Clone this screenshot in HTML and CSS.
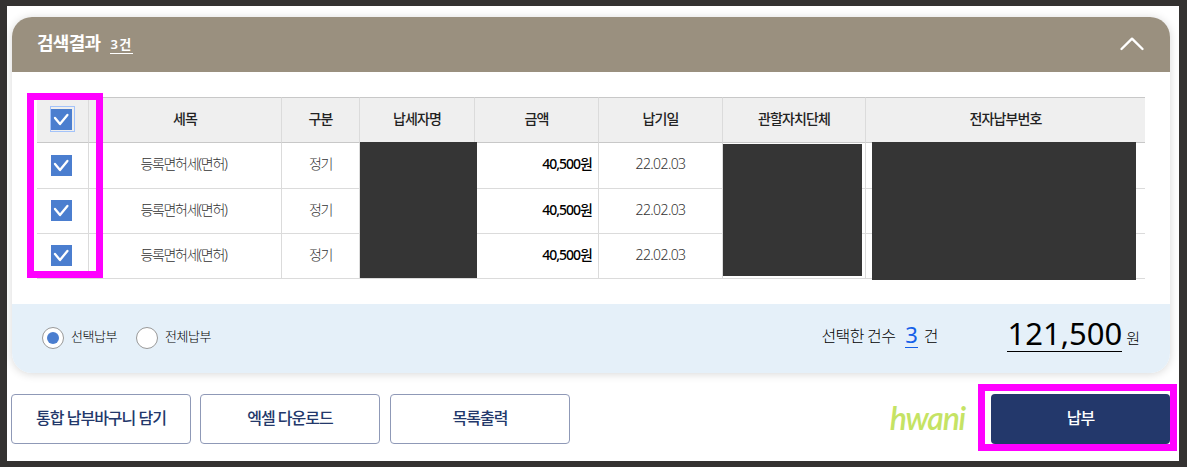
FILE: index.html
```
<!DOCTYPE html>
<html lang="ko">
<head>
  <meta charset="UTF-8" />
  <meta name="viewport" content="width=device-width, initial-scale=1.0" />
  <title>검색결과</title>
  <link rel="stylesheet" href="styles.css">
</head>
<body>
  <svg width="0" height="0" class="defs">
    <symbol id="check" viewBox="0 0 21 21">
      <path d="M4 9 L9 15 L16.4 6" fill="none" stroke="#fff" stroke-width="2.3" stroke-linecap="round" stroke-linejoin="round" />
    </symbol>
  </svg>

  <div class="page">
    <section class="card">
      <header class="card-header">
        <h2>검색결과</h2>
        <span class="count">3건</span>
        <svg class="toggle" width="26" height="16" viewBox="0 0 26 16">
          <path d="M2.5 13 L13 2.7 L23.5 13" fill="none" stroke="#fff" stroke-width="2.4" stroke-linecap="round" stroke-linejoin="round" />
        </svg>
      </header>

      <div class="table-wrap">
        <table>
          <colgroup>
            <col class="c-check"><col class="c-item"><col class="c-type"><col class="c-name">
            <col class="c-price"><col class="c-date"><col class="c-office"><col class="c-number">
          </colgroup>
          <thead>
            <tr>
              <th><span class="checkbox focus"><svg><use href="#check" /></svg></span></th>
              <th>세목</th>
              <th>구분</th>
              <th>납세자명</th>
              <th>금액</th>
              <th>납기일</th>
              <th>관할자치단체</th>
              <th>전자납부번호</th>
            </tr>
          </thead>
          <tbody>
            <tr class="first">
              <td><span class="checkbox"><svg><use href="#check" /></svg></span></td>
              <td class="item">등록면허세(면허)</td>
              <td>정기</td>
              <td></td>
              <td class="price">40,500원</td>
              <td class="date">22.02.03</td>
              <td></td>
              <td></td>
            </tr>
            <tr>
              <td><span class="checkbox"><svg><use href="#check" /></svg></span></td>
              <td class="item">등록면허세(면허)</td>
              <td>정기</td>
              <td></td>
              <td class="price">40,500원</td>
              <td class="date">22.02.03</td>
              <td></td>
              <td></td>
            </tr>
            <tr>
              <td><span class="checkbox"><svg><use href="#check" /></svg></span></td>
              <td class="item">등록면허세(면허)</td>
              <td>정기</td>
              <td></td>
              <td class="price">40,500원</td>
              <td class="date">22.02.03</td>
              <td></td>
              <td></td>
            </tr>
          </tbody>
        </table>
        <!-- private columns -->
        <div class="mask mask-name"></div>
        <div class="mask mask-office"></div>
        <div class="mask mask-number"></div>
        <div class="highlight highlight-check"></div>
      </div>

      <footer class="summary">
        <span class="radio on"></span>
        <span class="radio-label">선택납부</span>
        <span class="radio"></span>
        <span class="radio-label">전체납부</span>
        <span class="selected">선택한 건수</span>
        <span class="selected-count">3</span>
        <span class="selected-unit">건</span>
        <span class="total">121,500</span>
        <span class="won">원</span>
      </footer>
    </section>

    <div class="buttons">
      <button>통합 납부바구니 담기</button>
      <button>엑셀 다운로드</button>
      <button>목록출력</button>
      <span class="mark">hwani</span>
      <div class="pay-wrap">
        <button class="pay">납부</button>
        <div class="highlight highlight-pay"></div>
      </div>
    </div>
  </div>
</body>
</html>
```
FILE: styles.css
```
* {
  box-sizing: border-box;
}

body {
  margin: 0;
  height: 467px;
  padding: 6px 8px 6px 7px;
  background: #343231;
  overflow: hidden;
  font-family: "Noto Sans", "Noto Sans CJK KR", sans-serif;
}

.defs {
  position: absolute;
}

.page {
  height: 455px;
  padding: 11px 9px 0 5px;
  background: #fff;
}

.card {
  height: 356px;
  border-radius: 20px;
  background: #fff;
  box-shadow: 0 1px 10px rgba(0, 0, 0, 0.16);
}

.card-header {
  display: flex;
  align-items: center;
  height: 55px;
  padding: 0 25px;
  border-radius: 20px 20px 0 0;
  background: #9a907f;
  color: #fff;
}

.card-header h2 {
  margin: 0;
  padding-bottom: 3px;
  font-size: 18px;
  line-height: 20px;
  letter-spacing: -0.7px;
}

.count {
  margin-left: 10px;
  font-size: 13px;
  font-weight: 600;
  line-height: 17px;
  letter-spacing: 1.4px;
  border-bottom: 1px solid #fff;
}

.toggle {
  margin-left: auto;
  margin-bottom: 1px;
}

.table-wrap {
  position: relative;
  height: 232px;
  padding: 25px 25px 0;
}

table {
  width: 1108px;
  table-layout: fixed;
  border-collapse: separate;
  border-spacing: 0;
}

.c-check { width: 52px; }
.c-item { width: 193px; }
.c-type { width: 78px; }
.c-name { width: 115px; }
.c-price { width: 124px; }
.c-date { width: 124px; }
.c-office { width: 143px; }
.c-number { width: 279px; }

th, td {
  height: 45px;
  padding: 0 0 3px;
  border-right: 1px solid #dbdbdb;
  border-bottom: 1px solid #dbdbdb;
  font-size: 14px;
  line-height: 20px;
  letter-spacing: -0.9px;
  text-align: center;
}

th {
  height: 46px;
  padding-bottom: 2px;
  border-top: 1px solid #c8c8c8;
  border-bottom-color: #c8c8c8;
  background: #efefef;
  color: #222;
  font-weight: 500;
}

td {
  color: #333;
  font-weight: 300;
  letter-spacing: -1.3px;
}

.first td {
  height: 46px;
}

th:last-child, td:last-child {
  border-right: 0;
}

th:first-child, td:first-child {
  padding: 0 3px 1px 0;
}

.first td:first-child {
  padding-bottom: 0;
}

.item {
  padding-right: 3px;
}

.price {
  padding-right: 6px;
  color: #000;
  font-weight: 500;
  letter-spacing: -1px;
  text-align: right;
}

.date {
  letter-spacing: -0.6px;
}

.checkbox {
  display: block;
  width: 21px;
  height: 21px;
  margin: 0 auto;
  background: #4b7ecf;
}

.checkbox svg {
  display: block;
  width: 21px;
  height: 21px;
}

.focus {
  position: relative;
}

.focus::after {
  content: "";
  position: absolute;
  inset: -3px -3px -2px -1px;
  border: 1px solid #a3c3fa;
}

.mask {
  position: absolute;
  background: #353535;
}

.mask-name {
  left: 348px;
  top: 70px;
  width: 117px;
  height: 136px;
}

.mask-office {
  left: 711px;
  top: 72px;
  width: 139px;
  height: 132px;
}

.mask-number {
  left: 860px;
  top: 70px;
  width: 264px;
  height: 138px;
}

.highlight {
  position: absolute;
  border: 7px solid #f0f;
}

.highlight-check {
  left: 15px;
  top: 21px;
  width: 76px;
  height: 185px;
}

.summary {
  display: flex;
  align-items: center;
  height: 69px;
  padding: 0 30px;
  border-radius: 0 0 20px 20px;
  background: #e5f0f9;
  color: #000;
}

.radio {
  display: flex;
  align-items: center;
  justify-content: center;
  width: 22px;
  height: 22px;
  margin-bottom: 1px;
  border: 1px solid #999;
  border-radius: 50%;
  background: #fff;
}

.radio.on::before {
  content: "";
  width: 12px;
  height: 12px;
  border-radius: 50%;
  background: #4b7ecf;
}

.radio-label {
  width: 65px;
  padding: 0 0 6px 7px;
  margin-right: 7px;
  color: #000;
  font-size: 13px;
  font-weight: 300;
  letter-spacing: -0.5px;
}

.selected {
  margin-left: auto;
  font-size: 16px;
  font-weight: 300;
  letter-spacing: -0.7px;
  padding-bottom: 7px;
}

.selected-count {
  margin: 0 6px 8px 10px;
  border-bottom: 1px solid #1560e8;
  color: #1560e8;
  font-size: 22px;
  line-height: 26px;
}

.selected-unit {
  font-size: 16px;
  font-weight: 300;
  padding-bottom: 7px;
}

.total {
  margin: 0 4px 9px 69px;
  border-bottom: 1px solid #000;
  font-size: 31px;
  line-height: 35px;
}

.won {
  padding-bottom: 2px;
  font-size: 15px;
  font-weight: 300;
}

.buttons {
  display: flex;
  margin: 21px 0 0 -1px;
}

button {
  width: 180px;
  height: 50px;
  margin-right: 10px;
  padding: 0 0 5px;
  border: 1px solid #8f99b7;
  border-radius: 4px;
  background: #fff;
  color: #23386b;
  font-family: inherit;
  font-size: 16px;
  font-weight: 500;
  letter-spacing: -1px;
}

.buttons > button:first-child {
  margin-right: 9px;
}

.mark {
  margin-left: auto;
  padding-right: 26px;
  color: #c5e364;
  font-family: Lato, sans-serif;
  font-size: 32px;
  font-style: italic;
  font-weight: 600;
  line-height: 47px;
  letter-spacing: -1.2px;
}

.pay-wrap {
  position: relative;
}

.pay {
  display: block;
  width: 179px;
  margin: 0;
  border: 0;
  background: #23386b;
  color: #fff;
}

.highlight-pay {
  left: -13px;
  top: -10px;
  width: 199px;
  height: 67px;
}
```
